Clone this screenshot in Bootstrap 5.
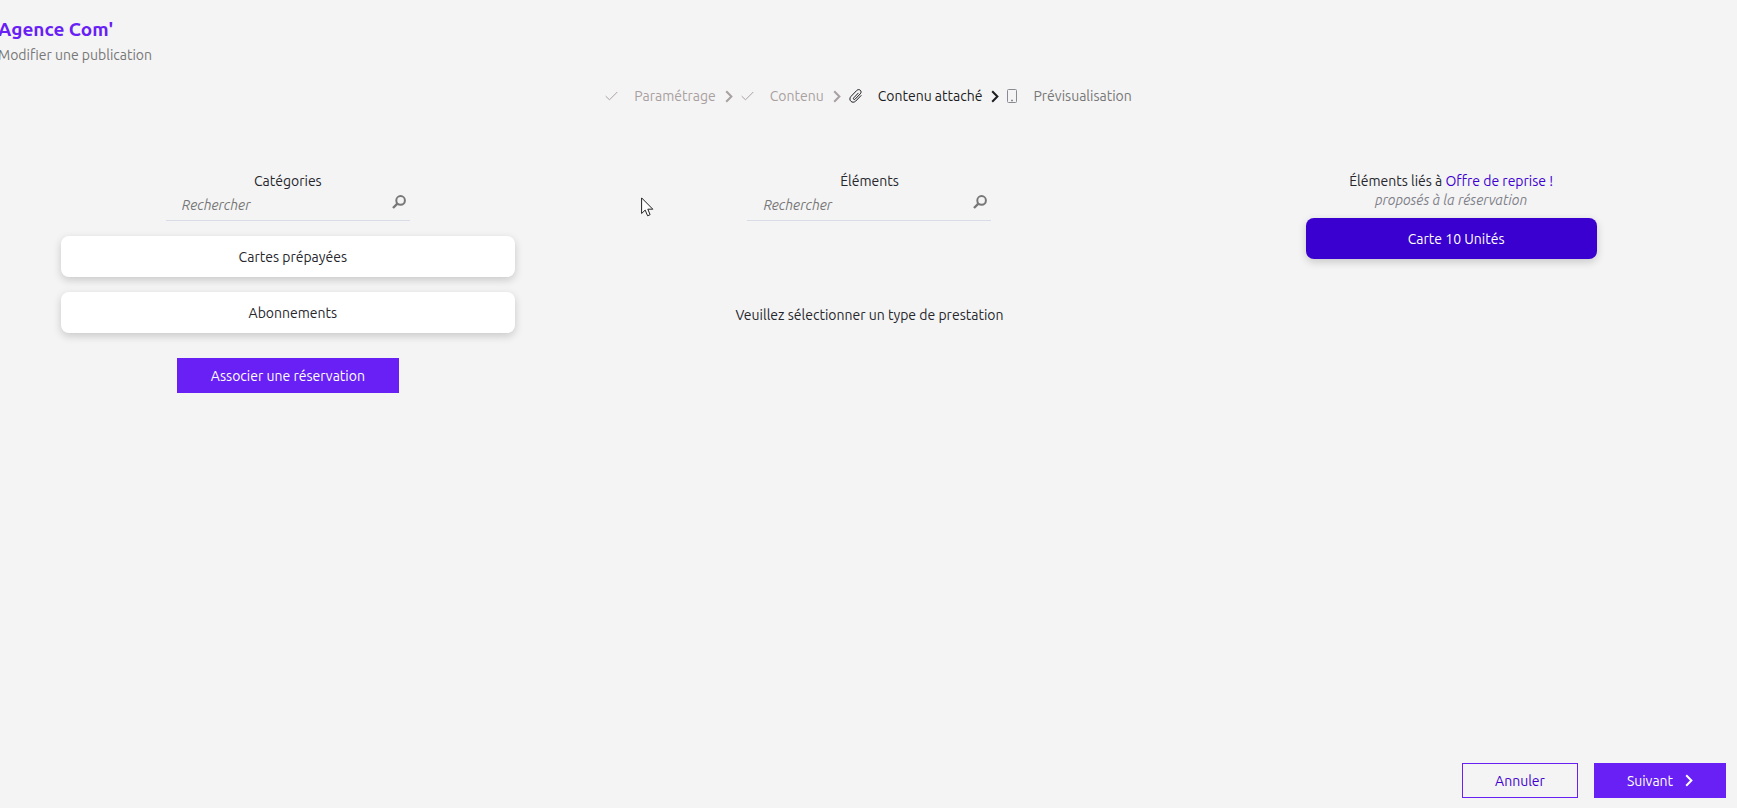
<!DOCTYPE html>
<html lang="fr">
<head>
<meta charset="utf-8">
<meta name="viewport" content="width=device-width, initial-scale=1">
<title>Agence Com' – Modifier une publication</title>
<link rel="stylesheet" href="https://cdn.jsdelivr.net/npm/bootstrap@5.3.0/dist/css/bootstrap.min.css">
<style>
  body { font-family: Ubuntu, "Noto Sans", sans-serif; font-size: 14px; line-height: 20px; color: #26262c; background: #f4f4f4; }
  .page { overflow: hidden; }
  .page-head { padding-top: 17px; margin-left: -2px; }
  .page-head h1 { font-size: 19px; line-height: 24px; font-weight: 700; color: #6820f5; margin: 0; }
  .page-head p { color: #777; margin: 3px 0 0; line-height: 22px; }
  .steps { margin-top: 20px; gap: 8px; }
  .step { gap: 9px; color: #777; }
  .step.done { color: #a9a0a0; }
  .step.active { color: #1c1c22; }
  .step-label { padding-left: 7px; }
  .columns { margin: 65px -5px 0 -3px; }
  .pane { padding: 0 64px; }
  .pane-title { font-size: 14px; line-height: 20px; font-weight: 400; margin: 0; }
  .search { width: 244px; height: 30px; border-bottom: 1px solid #d8dce6; }
  .search input { border: 0; background: transparent; font-style: italic; padding: 0 0 0 16px; height: 28px; color: #333; outline: 0; }
  .search input::placeholder { color: #777; }
  .search button { width: 22px; height: 21px; border: 0; background: transparent; padding: 4px 4px 0; color: #777; }
  .tile { border: 0; border-radius: 8px; height: 41px; padding: 0 0 0 10px; background: #fff; color: #26262c; box-shadow: 0 3px 9px rgba(0, 0, 0, .18); }
  .pane .tile { margin-top: 15px; }
  .tile.linked { background: #3a00cf; color: #fff; }
  .action { height: 35px; border: 1px solid #6820f5; background: #6820f5; color: #fff; padding: 0 16px; }
  .action.outline { background: transparent; color: #4000cf; width: 116px; }
  .action.next { width: 132px; gap: 12px; }
  .action.link-booking { width: 222px; margin-top: 25px; }
  .offer { color: #4000cf; }
  .empty-note { margin-top: 84px; }
  .hint { color: #80808a; line-height: 19px; }
  .page-foot { padding: 0 11px 10px; gap: 16px; }
  .pointer { left: 641px; top: 197px; }
</style>
</head>
<body>
<svg class="d-none">
  <symbol id="check" viewBox="0 0 13 10"><path d="M.7 5.2 4.5 8.8 12.3 1" fill="none" stroke="currentColor"/></symbol>
  <symbol id="chevron" viewBox="0 0 8 13"><path d="m1.2 1.2 5.2 5.3-5.2 5.3" fill="none" stroke="currentColor" stroke-width="2"/></symbol>
  <symbol id="lens" viewBox="0 0 14 14"><circle cx="8.6" cy="5.4" r="4.3" fill="none" stroke="currentColor" stroke-width="2"/><path d="M5.4 8.7 1 13" stroke="currentColor" stroke-width="2.4"/></symbol>
</svg>
<div class="page position-relative d-flex flex-column min-vh-100">
  <header class="page-head">
    <h1>Agence Com'</h1>
    <p>Modifier une publication</p>
  </header>

  <nav class="steps d-flex justify-content-center" aria-label="Étapes">
    <div class="step done d-flex align-items-center">
      <svg width="13" height="10"><use href="#check"/></svg><span class="step-label">Paramétrage</span><svg width="8" height="13"><use href="#chevron"/></svg>
    </div>
    <div class="step done d-flex align-items-center">
      <svg width="13" height="10"><use href="#check"/></svg><span class="step-label">Contenu</span><svg width="8" height="13"><use href="#chevron"/></svg>
    </div>
    <div class="step active d-flex align-items-center" aria-current="step">
      <svg width="13" height="14" viewBox="0 0 13 14" fill="none" stroke="currentColor" stroke-linecap="round"><path d="M9.200 4.200 4.700 8.900c-.9 1 .4 2.300 1.400 1.300l5.200-5.400c2.300-2.500-1-5.700-3.500-3.400L2 7.400c-3.300 3.500 1.400 7.900 4.700 4.700l5.300-5.500"/></svg><span class="step-label">Contenu attaché</span><svg width="8" height="13"><use href="#chevron"/></svg>
    </div>
    <div class="step d-flex align-items-center">
      <svg width="10" height="14" viewBox="0 0 10 14" fill="none" stroke="#8a8a94"><rect x=".5" y=".5" width="9" height="13" rx="1"/><path d="M4 11.500h2" stroke-width="1.500"/></svg><span class="step-label">Prévisualisation</span>
    </div>
  </nav>

  <main class="columns row gx-0">
    <section class="pane col-4 d-flex flex-column align-items-center">
      <h2 class="pane-title"><label for="find-category">Catégories</label></h2>
      <div class="search d-flex">
        <input id="find-category" class="flex-grow-1 w-100" type="text" placeholder="Rechercher">
        <button type="button" class="d-flex align-items-start" aria-label="Rechercher une catégorie"><svg width="14" height="14"><use href="#lens"/></svg></button>
      </div>
      <button type="button" class="tile w-100">Cartes prépayées</button>
      <button type="button" class="tile w-100">Abonnements</button>
      <button type="button" class="action link-booking">Associer une réservation</button>
    </section>
    <section class="pane col-4 d-flex flex-column align-items-center">
      <h2 class="pane-title"><label for="find-item">Éléments</label></h2>
      <div class="search d-flex">
        <input id="find-item" class="flex-grow-1 w-100" type="text" placeholder="Rechercher">
        <button type="button" class="d-flex align-items-start" aria-label="Rechercher un élément"><svg width="14" height="14"><use href="#lens"/></svg></button>
      </div>
      <p class="empty-note text-center mb-0">Veuillez sélectionner un type de prestation</p>
    </section>
    <section class="col-4 d-flex flex-column align-items-center">
      <h2 class="pane-title">Éléments liés à <span class="offer">Offre de reprise !</span></h2>
      <em class="hint">proposés à la réservation</em>
      <button type="button" class="tile linked w-50 mt-2">Carte 10 Unités</button>
    </section>
  </main>

  <footer class="page-foot d-flex justify-content-end mt-auto">
    <button type="button" class="action outline">Annuler</button>
    <button type="button" class="action next d-flex align-items-center justify-content-center">Suivant <svg width="8" height="13"><use href="#chevron"/></svg></button>
  </footer>

  <svg class="pointer position-absolute" width="13" height="20" viewBox="0 0 13 20"><path d="M.6.900v15.600l3.600-3.400 2.400 5.700 2.500-1.100-2.300-5.500h5z" fill="#fff" stroke="#222"/></svg>
</div>
<script src="https://cdn.jsdelivr.net/npm/bootstrap@5.3.0/dist/js/bootstrap.bundle.min.js"></script>
</body>
</html>
